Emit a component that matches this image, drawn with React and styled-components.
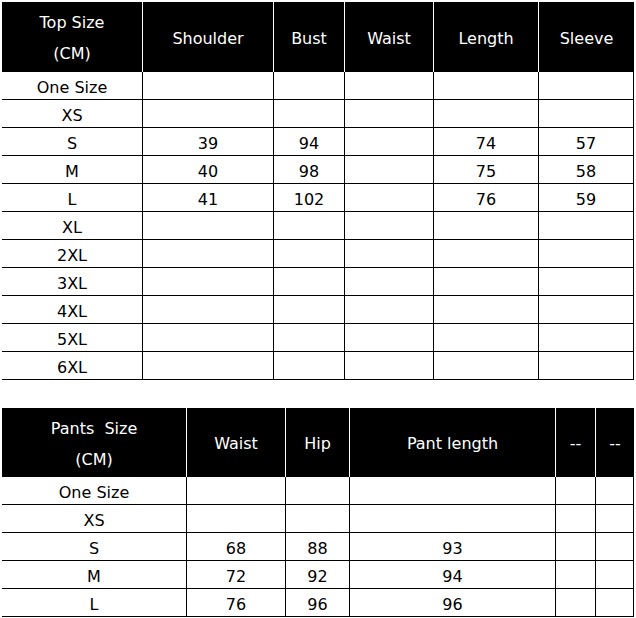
import React from 'react';
import styled, { createGlobalStyle } from 'styled-components';

const GlobalStyle = createGlobalStyle`
    html, body {
        margin: 0;
        padding: 0;
        background: #fff;
    }
    body {
        font-family: "DejaVu Sans", Verdana, sans-serif;
    }
`;

const topTable = {
    headHeight: 70,
    cols: [141, 131, 71, 89, 105, 95],
    head: [['Top Size', '(CM)'], 'Shoulder', 'Bust', 'Waist', 'Length', 'Sleeve'],
    rows: [
        ['One Size', '', '', '', '', ''],
        ['XS', '', '', '', '', ''],
        ['S', '39', '94', '', '74', '57'],
        ['M', '40', '98', '', '75', '58'],
        ['L', '41', '102', '', '76', '59'],
        ['XL', '', '', '', '', ''],
        ['2XL', '', '', '', '', ''],
        ['3XL', '', '', '', '', ''],
        ['4XL', '', '', '', '', ''],
        ['5XL', '', '', '', '', ''],
        ['6XL', '', '', '', '', ''],
    ],
};

const pantsTable = {
    headHeight: 69,
    cols: [185, 99, 64, 206, 40, 38],
    head: [['Pants\u00a0\u00a0Size', '(CM)'], 'Waist', 'Hip', 'Pant length', '--', '--'],
    rows: [
        ['One Size', '', '', '', '', ''],
        ['XS', '', '', '', '', ''],
        ['S', '68', '88', '93', '', ''],
        ['M', '72', '92', '94', '', ''],
        ['L', '76', '96', '96', '', ''],
    ],
};

function SizeTable({ data }) {
    return (
        <Grid $cols={data.cols} $head={data.headHeight}>
            {data.head.map((h, i) => (
                <HeadCell key={'h' + i} $last={i === data.head.length - 1}>
                    {Array.isArray(h) ? h.map((line) => <HeadLine key={line}>{line}</HeadLine>) : h}
                </HeadCell>
            ))}
            {data.rows.map((row, r) =>
                row.map((val, c) => (
                    <Cell key={r + '-' + c}>{val}</Cell>
                ))
            )}
        </Grid>
    );
}

export default function App() {
    return (
        <Page>
            <GlobalStyle />
            <SizeTable data={topTable} />
            <SizeTable data={pantsTable} />
        </Page>
    );
}

const Page = styled.div`
    padding: 2px;
    width: 632px;
    display: flex;
    flex-direction: column;
    gap: 28px;
`;

const Grid = styled.div`
    display: grid;
    grid-template-columns: ${(p) => p.$cols.map((c) => c + 'px').join(' ')};
    grid-template-rows: ${(p) => p.$head}px;
    grid-auto-rows: 28px;
`;

const HeadCell = styled.div`
    background: #000;
    color: #fff;
    font-size: 16px;
    display: flex;
    flex-direction: column;
    align-items: center;
    justify-content: center;
    text-align: center;
    box-sizing: border-box;
    padding-top: 2px;
    border-right: ${(p) => (p.$last ? 'none' : '1px solid #fff')};
`;

const HeadLine = styled.span`
    display: block;
    line-height: 31px;
`;

const Cell = styled.div`
    box-sizing: border-box;
    display: flex;
    align-items: center;
    justify-content: center;
    font-size: 16px;
    color: #000;
    border-bottom: 1px solid #000;
    border-right: 1px solid #000;
    padding-top: 3px;
`;
